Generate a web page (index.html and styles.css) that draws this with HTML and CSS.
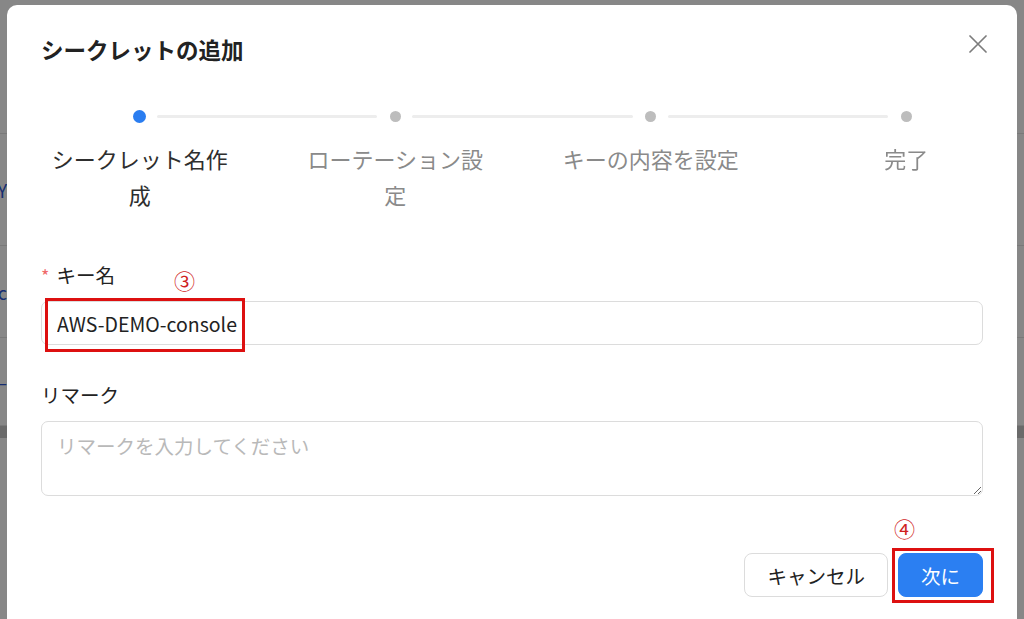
FILE: index.html
```html
<!DOCTYPE html>
<html lang="ja">
<head>
<meta charset="utf-8">
<title>シークレットの追加</title>
<link rel="stylesheet" href="styles.css">
</head>
<body>
<div class="page">
  <div class="page-head"></div>
  <div class="page-row row-a"><span class="cell"><span class="link">DEMO-KEY</span></span></div>
  <div class="page-row row-b"><span class="cell"><span class="link">console-abc</span></span></div>
  <div class="page-row row-c"><span class="cell"><span class="link">—</span></span></div>
  <div class="page-scroll"></div>
</div>
<div class="mask"></div>
<div class="dialog">
  <div class="dialog-header">
    <h2 class="dialog-title">シークレットの追加</h2>
    <button class="close" type="button" aria-label="閉じる">
      <svg width="18" height="18" viewBox="0 0 18 18"><path d="M1 1 L17 17 M17 1 L1 17" stroke="#7c7c7c" stroke-width="1.7" fill="none" stroke-linecap="round"/></svg>
    </button>
  </div>
  <div class="steps">
    <div class="step active"><div class="step-head"><span class="dot"></span></div><div class="step-title">シークレット名作成</div></div>
    <div class="step"><div class="step-head"><span class="dot"></span></div><div class="step-title">ローテーション設定</div></div>
    <div class="step"><div class="step-head"><span class="dot"></span></div><div class="step-title">キーの内容を設定</div></div>
    <div class="step"><div class="step-head"><span class="dot"></span></div><div class="step-title">完了</div></div>
  </div>
  <form class="form">
    <div class="form-item">
      <label class="form-label"><span class="req">*</span>キー名</label>
      <input class="input" type="text" value="AWS-DEMO-console">
      <span class="mark mark-3">③</span>
      <span class="box box-input"></span>
    </div>
    <div class="form-item last">
      <label class="form-label">リマーク</label>
      <textarea class="input textarea" placeholder="リマークを入力してください"></textarea>
    </div>
  </form>
  <div class="footer">
    <button class="btn" type="button">キャンセル</button>
    <button class="btn btn-primary" type="button">次に</button>
    <span class="mark mark-4">④</span>
    <span class="box box-next"></span>
  </div>
</div>
</body>
</html>
```

FILE: styles.css
```css
html, body {
  margin: 0;
  padding: 0;
}
body {
  width: 1024px;
  height: 619px;
  overflow: hidden;
  position: relative;
  background: #ffffff;
  font-family: "Noto Sans CJK JP", "Noto Sans", sans-serif;
}

/* underlying page */
.page-head {
  height: 133px;
  border-bottom: 1px solid #e4e4e4;
}
.page-row {
  display: flex;
  align-items: center;
  border-bottom: 1px solid #e4e4e4;
}
.row-a { height: 111px; }
.row-b { height: 91px; }
.row-c { height: 87px; }
.cell {
  width: 7px;
  overflow: hidden;
  display: flex;
  justify-content: flex-end;
  white-space: nowrap;
}
.link {
  color: #2a56d6;
  font-size: 18px;
}
.page-scroll {
  height: 12px;
  background: #c8c8c8;
}
.mask {
  position: fixed;
  inset: 0;
  background: rgba(0, 0, 0, 0.47);
}

/* dialog */
.dialog {
  position: absolute;
  left: 7px;
  top: 5px;
  width: 1010px;
  height: 680px;
  box-sizing: border-box;
  padding: 28px 34px 30px;
  background: #ffffff;
  border-radius: 10px;
}
.dialog-header {
  display: flex;
  justify-content: space-between;
  align-items: flex-start;
}
.dialog-title {
  margin: 0;
  font-size: 22.5px;
  line-height: 32px;
  font-weight: 700;
  color: #222222;
}
.close {
  display: block;
  width: 18px;
  height: 18px;
  padding: 0;
  margin: 2px -4px 0 0;
  border: 0;
  background: none;
}
.close svg { display: block; }

/* steps */
.steps {
  display: grid;
  grid-template-columns: repeat(4, 255.5px);
  margin: 45px 0 0 -29px;
}
.step {
  position: relative;
  display: flex;
  flex-direction: column;
  align-items: center;
}
.step-head {
  width: 100%;
  height: 12px;
  display: flex;
  align-items: center;
  justify-content: center;
}
.dot {
  width: 11px;
  height: 11px;
  border-radius: 50%;
  background: #bdbdbd;
}
.step.active .dot {
  width: 13px;
  height: 13px;
  background: #2a7df0;
}
.step:not(:last-child)::after {
  content: "";
  position: absolute;
  top: 5px;
  left: calc(50% + 17px);
  width: calc(100% - 35px);
  height: 3px;
  border-radius: 2px;
  background: #ededed;
}
.step-title {
  margin-top: 18px;
  max-width: 186px;
  text-align: center;
  font-size: 22px;
  line-height: 36px;
  color: #8a8a8a;
}
.step.active .step-title {
  color: #2e2e2e;
}

/* form */
.form {
  margin-top: 50px;
}
.form-item {
  position: relative;
  margin-bottom: 37px;
}
.form-item.last {
  margin-bottom: 0;
}
.form-label {
  display: flex;
  align-items: center;
  font-size: 19.5px;
  line-height: 26px;
  color: #222222;
  margin-bottom: 13px;
}
.req {
  color: #f06a6a;
  font-size: 18px;
  margin-right: 7px;
}
.input {
  display: block;
  width: 100%;
  box-sizing: border-box;
  height: 44px;
  padding: 0 15px;
  border: 1px solid #dcdcdc;
  border-radius: 7px;
  background: #ffffff;
  font-family: inherit;
  font-size: 19.5px;
  color: #222222;
  outline: none;
}
.textarea {
  height: 75px;
  padding: 10px 15px;
  line-height: 28px;
  resize: vertical;
}
.textarea::placeholder {
  color: #b9b9b9;
}

/* footer */
.footer {
  position: relative;
  display: flex;
  justify-content: flex-end;
  gap: 10px;
  margin-top: 57px;
}
.btn {
  height: 44px;
  padding: 0 22px;
  border: 1px solid #dcdcdc;
  border-radius: 8px;
  background: #ffffff;
  color: #222222;
  font-family: inherit;
  font-size: 19.5px;
}
.btn-primary {
  padding: 0 22px;
  background: #2b7ff2;
  border-color: #2b7ff2;
  color: #ffffff;
}

/* annotations */
.mark {
  position: absolute;
  color: #d01f1f;
  font-size: 21px;
  line-height: 21px;
}
.mark-3 {
  left: 133px;
  top: 8px;
}
.mark-4 {
  right: 68px;
  top: -35px;
}
.box {
  position: absolute;
  box-sizing: border-box;
  border: 3px solid #dd1010;
}
.box-input {
  left: 4px;
  top: 36px;
  width: 200px;
  height: 54px;
}
.box-next {
  right: -11px;
  top: -5px;
  width: 102px;
  height: 55px;
}
```
